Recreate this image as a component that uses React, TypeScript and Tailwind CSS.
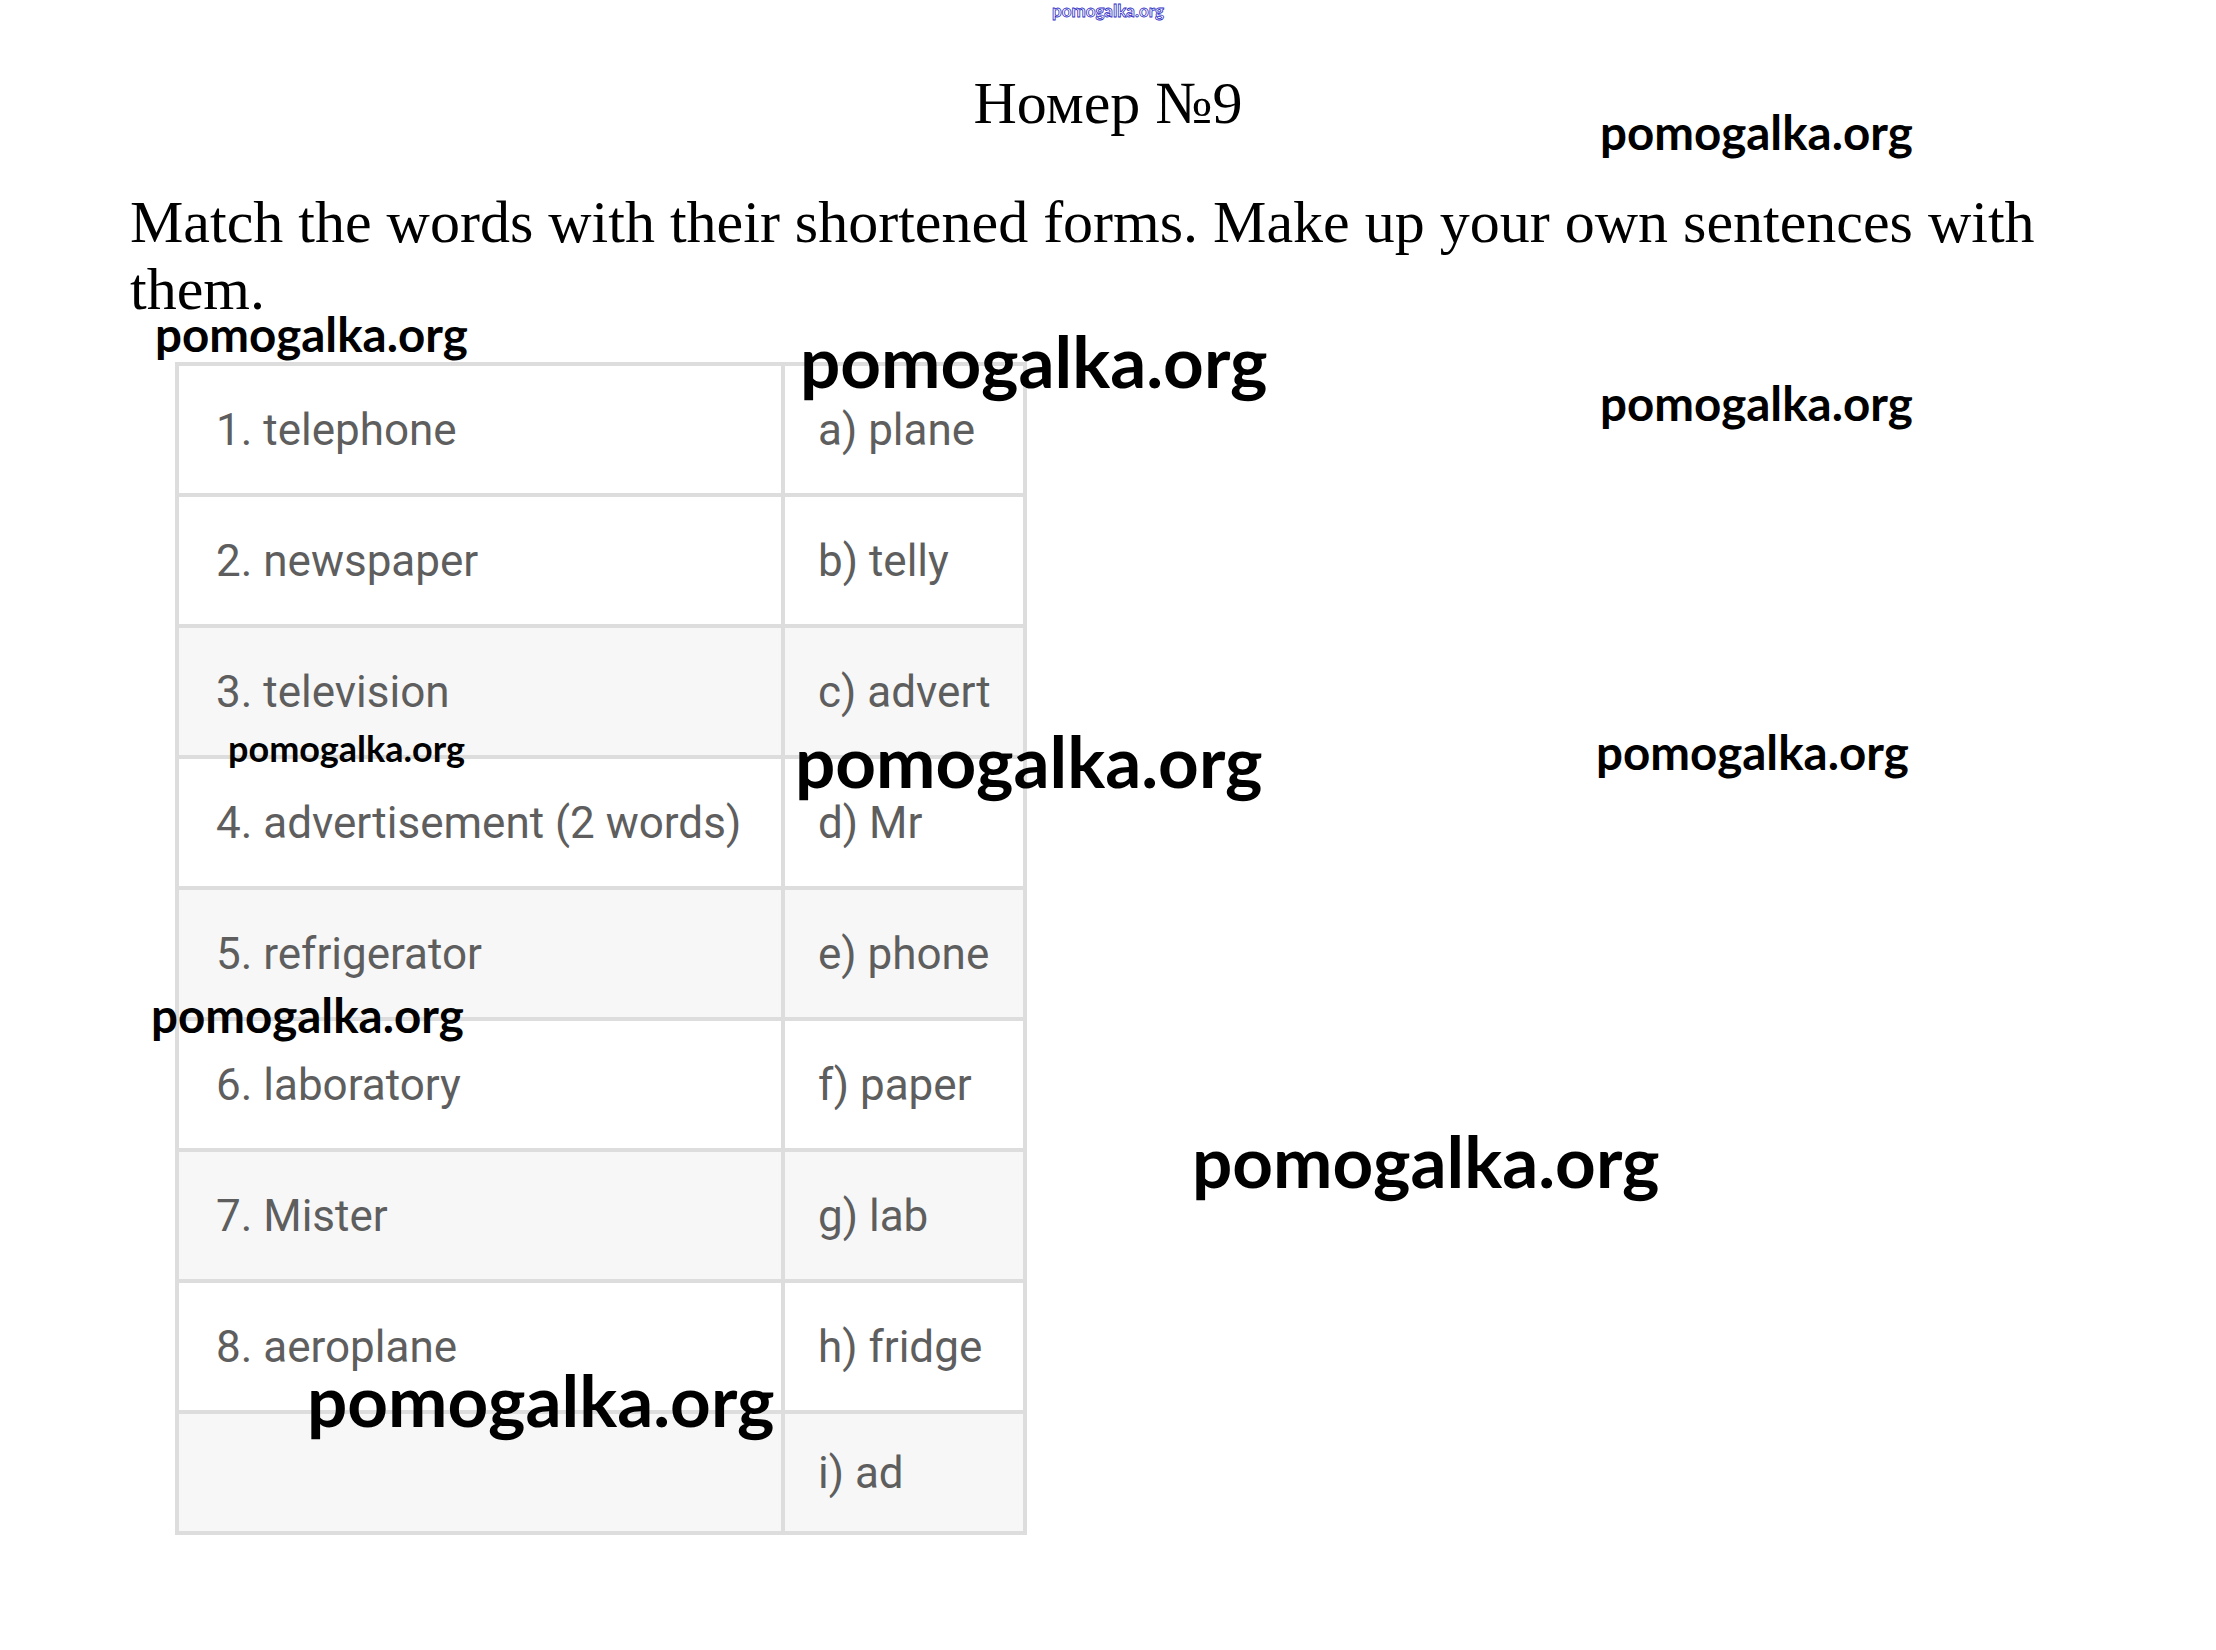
import React from "react";

const rows: { left: string; right: string; gray: boolean; h: string }[] = [
  { left: "1. telephone", right: "a) plane", gray: false, h: "h-[131px]" },
  { left: "2. newspaper", right: "b) telly", gray: false, h: "h-[131px]" },
  { left: "3. television", right: "c) advert", gray: true, h: "h-[131px]" },
  { left: "4. advertisement (2 words)", right: "d) Mr", gray: false, h: "h-[131px]" },
  { left: "5. refrigerator", right: "e) phone", gray: true, h: "h-[131px]" },
  { left: "6. laboratory", right: "f) paper", gray: false, h: "h-[131px]" },
  { left: "7. Mister", right: "g) lab", gray: true, h: "h-[131px]" },
  { left: "8. aeroplane", right: "h) fridge", gray: false, h: "h-[131px]" },
  { left: "", right: "i) ad", gray: true, h: "h-[121px]" },
];

type WM = { x: number; base: number; fs: number };
const marks: WM[] = [
  { x: 1600, base: 150, fs: 47.5 },
  { x: 155, base: 352, fs: 47.5 },
  { x: 800, base: 388, fs: 71 },
  { x: 1600, base: 421, fs: 47.5 },
  { x: 228, base: 762, fs: 36 },
  { x: 795, base: 788, fs: 71 },
  { x: 1596, base: 770, fs: 47.5 },
  { x: 151, base: 1033, fs: 47.5 },
  { x: 1192, base: 1188, fs: 71 },
  { x: 307, base: 1427, fs: 71 },
];

export default function App() {
  return (
    <div className="relative w-[2216px] h-[1650px] bg-white overflow-hidden">
      <div className="flex flex-col">
        <h1
          className="mt-[73px] text-center text-[60px] leading-none font-normal text-black"
          style={{ fontFamily: '"Liberation Serif", "Times New Roman", serif' }}
        >
          Номер №9
        </h1>
        <p
          className="mt-[56px] ml-[130px] w-[1960px] text-[60px] leading-[67px] text-black"
          style={{ fontFamily: '"Liberation Serif", "Times New Roman", serif' }}
        >
          Match the words with their shortened forms. Make up your own sentences with them.
        </p>
        <table
          className="mt-[39px] ml-[175px] w-[852px] border-collapse border-4 border-[#dddddd] text-[44px] text-[#5e5e5e]"
          style={{ fontFamily: 'Roboto, "Liberation Sans", sans-serif' }}
        >
          <tbody>
            {rows.map((r, i) => (
              <tr key={i} className={`${r.h} ${r.gray ? "bg-[#f7f7f7]" : "bg-white"}`}>
                <td className="w-[606px] border-4 border-[#dddddd] pl-[37px] align-middle whitespace-nowrap">{r.left}</td>
                <td className="border-4 border-[#dddddd] pl-[33px] align-middle whitespace-nowrap">{r.right}</td>
              </tr>
            ))}
          </tbody>
        </table>
      </div>

      <div
        className="absolute left-0 top-[2px] w-full text-center text-[17px] leading-none font-bold text-transparent [-webkit-text-stroke:0.8px_#2b2bc4]"
        style={{ fontFamily: 'Lato, "Open Sans", sans-serif' }}
      >
        pomogalka.org
      </div>

      {marks.map((m, i) => (
        <div
          key={i}
          className="absolute leading-none font-bold text-black whitespace-nowrap"
          style={{
            left: m.x,
            top: m.base - 0.887 * m.fs,
            fontSize: m.fs,
            fontFamily: 'Lato, "Open Sans", sans-serif',
          }}
        >
          pomogalka.org
        </div>
      ))}
    </div>
  );
}
